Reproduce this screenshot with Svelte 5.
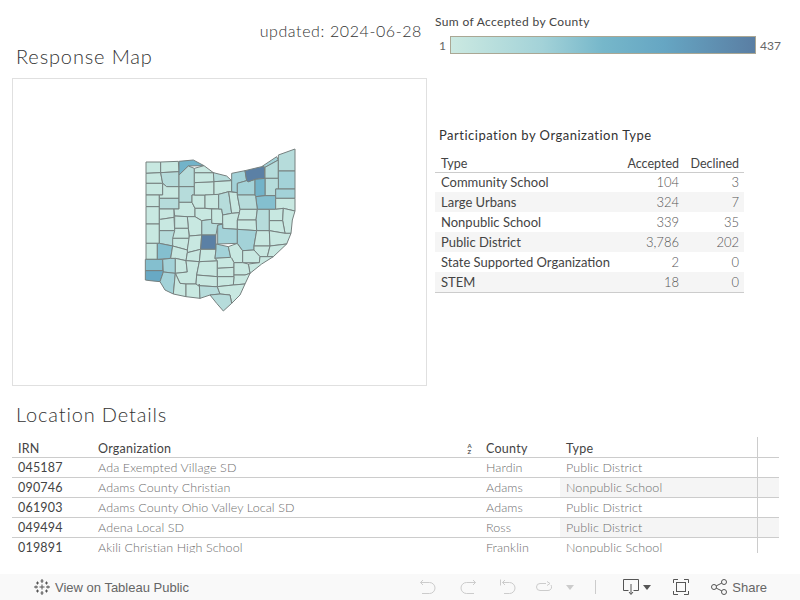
<script>
  const base = "#c8e8e1";
  const soft = "#b6dcdb";
  const mid = "#a3d2d8";
  const strong = "#84bfcf";
  const teal = "#72b3c9";
  const deep = "#5b80a5";

  // [points, fill], traced on a 540 x 540 box around the state
  const counties = [
    ["48,66 92,66 92,98 48,100", base],
    ["48,100 92,98 98,130 48,130", base],
    ["48,130 98,130 98,165 48,165", base],
    ["48,165 88,165 88,200 48,200", base],
    ["48,200 88,200 88,252 48,252", base],
    ["48,252 88,252 88,310 48,310", base],
    ["48,310 82,310 82,358 48,358", base],
    ["46,358 98,358 98,392 46,392", strong],
    ["46,392 100,392 100,396 90,425 60,422 46,420", "#68a9c4"],
    ["92,66 145,64 147,95 92,98", base],
    ["92,98 147,95 147,140 110,140 98,130", soft],
    ["98,130 110,140 147,140 147,175 88,175 88,165 98,165", base],
    ["88,175 147,175 147,207 88,207", soft],
    ["88,207 132,207 132,232 92,238 88,238", base],
    ["88,238 92,238 132,232 134,272 88,272", base],
    ["88,272 134,272 128,318 88,310", soft],
    ["82,310 88,310 128,318 122,355 82,358", strong],
    ["98,358 122,355 136,355 136,400 100,396", mid],
    ["100,396 136,400 130,462 105,450 90,425", mid],
    ["147,64 190,60 222,77 175,78 147,105", teal],
    ["147,105 175,78 193,85 193,140 147,140", soft],
    ["147,140 193,140 193,165 186,165 186,187 147,187", soft],
    ["147,187 186,187 195,205 195,230 172,230 134,228 132,207 147,207", base],
    ["186,165 225,165 225,205 195,205 186,187", base],
    ["193,128 252,125 252,165 193,165", base],
    ["193,98 252,98 252,125 193,128", base],
    ["193,85 222,77 250,98 193,98", base],
    ["250,98 290,108 305,122 252,125", soft],
    ["252,125 305,122 305,155 296,155 266,163 252,165", base],
    ["225,165 266,163 266,207 225,205", base],
    ["195,205 225,205 245,207 245,238 215,242 195,230", base],
    ["245,207 275,207 278,225 278,252 245,250", base],
    ["266,163 296,155 305,220 278,225 275,207 266,207", soft],
    ["296,155 322,158 322,165 330,208 328,218 305,220", base],
    ["305,100 345,92 350,122 322,130 322,158 305,155", mid],
    ["322,130 350,122 355,125 375,118 375,165 322,165", mid],
    ["345,92 395,80 403,80 405,115 375,118 355,125 350,122", deep],
    ["395,80 440,50 445,60 405,82 403,80", mid],
    ["405,82 445,60 445,115 405,115", soft],
    ["445,45 495,27 495,93 445,93", soft],
    ["445,93 495,93 495,147 437,147 445,147", mid],
    ["405,115 445,115 445,147 437,147 437,167 405,167", soft],
    ["375,118 405,115 405,167 377,170 375,165", teal],
    ["377,170 405,167 437,167 437,208 382,208", strong],
    ["437,147 495,147 495,175 437,175", mid],
    ["437,175 495,175 495,213 460,205 437,208", base],
    ["322,165 375,165 377,170 382,208 330,208", soft],
    ["330,208 382,208 378,240 322,240 328,218", base],
    ["382,208 418,208 418,272 380,272 378,240", soft],
    ["418,208 437,208 460,205 458,242 418,242", base],
    ["460,205 495,213 487,240 483,280 465,280 458,242", base],
    ["418,242 458,242 465,280 418,272", base],
    ["278,225 305,220 328,218 322,240 322,268 278,265 278,252", base],
    ["322,240 378,240 380,272 322,268", base],
    ["263,255 278,252 278,265 322,268 322,310 263,312", mid],
    ["215,242 245,238 245,250 278,252 263,255 258,285 215,285", soft],
    ["172,230 195,230 215,242 215,285 178,288 175,265", base],
    ["134,228 172,230 175,265 134,265", base],
    ["134,265 175,265 178,295 128,295 134,272", base],
    ["128,295 178,295 172,330 128,318", base],
    ["178,288 215,285 212,328 172,338 172,330", base],
    ["215,285 258,285 258,328 212,328", deep],
    ["128,318 172,330 172,338 168,362 136,355 122,355", base],
    ["136,355 168,362 172,396 136,400", base],
    ["172,338 212,328 208,365 168,362", base],
    ["136,400 172,396 168,362 208,365 200,405 198,432 168,432 150,430", base],
    ["136,400 150,430 168,432 168,470 130,462", base],
    ["168,432 208,432 210,475 168,470", base],
    ["208,365 262,362 262,410 200,405", base],
    ["212,328 258,328 255,355 262,362 208,365", base],
    ["258,312 295,320 302,352 255,355 258,328", mid],
    ["295,320 322,310 338,332 338,368 312,368 305,355 302,352", base],
    ["262,362 255,355 302,352 305,355 312,368 312,382 262,385", base],
    ["262,385 312,382 312,410 262,410", base],
    ["322,268 380,272 372,318 372,330 338,332 322,310", mid],
    ["380,272 418,272 420,318 372,318", base],
    ["418,272 465,280 483,280 470,312 420,318", base],
    ["372,318 420,318 412,350 390,350 372,330", base],
    ["420,318 470,312 430,350 412,350", base],
    ["338,332 372,330 390,350 388,368 338,368", base],
    ["390,350 430,350 395,372 360,400 355,372 388,368", base],
    ["312,368 338,368 355,372 360,400 345,405 312,405 312,382", base],
    ["312,405 345,405 360,400 345,432 310,435", base],
    ["262,410 312,410 310,435 262,440", base],
    ["200,405 262,410 262,440 255,440 205,437 198,432", base],
    ["205,437 255,440 262,440 270,462 240,465 210,475 208,432", soft],
    ["262,440 310,435 345,432 330,465 305,490 300,465 270,462", base],
    ["240,465 270,462 300,465 305,490 280,513 260,490", soft]
  ];

  const orgTypes = [
    ["Community School", "104", "3"],
    ["Large Urbans", "324", "7"],
    ["Nonpublic School", "339", "35"],
    ["Public District", "3,786", "202"],
    ["State Supported Organization", "2", "0"],
    ["STEM", "18", "0"]
  ];

  const locations = [
    ["045187", "Ada Exempted Village SD", "Hardin", "Public District"],
    ["090746", "Adams County Christian", "Adams", "Nonpublic School"],
    ["061903", "Adams County Ohio Valley Local SD", "Adams", "Public District"],
    ["049494", "Adena Local SD", "Ross", "Public District"],
    ["019891", "Akili Christian High School", "Franklin", "Nonpublic School"]
  ];
</script>

<div class="page">
  <div class="top">
    <section class="left">
      <div class="updated">updated: 2024-06-28</div>
      <h1>Response Map</h1>
      <div class="map">
        <svg width="180" height="180" viewBox="0 0 540 540" aria-label="Map of Ohio counties">
          {#each counties as [points, fill]}
            <polygon {points} {fill} stroke="#76807f" stroke-width="3" stroke-linejoin="round" />
          {/each}
        </svg>
      </div>
    </section>

    <section class="right">
      <div class="legend">
        <div class="legend-title">Sum of Accepted by County</div>
        <div class="legend-row">
          <span class="legend-min">1</span>
          <span class="legend-bar"></span>
          <span class="legend-max">437</span>
        </div>
      </div>
      <h2>Participation by Organization Type</h2>
      <div class="types">
        <div class="type-row type-head">
          <span>Type</span><span class="num">Accepted</span><span class="num">Declined</span>
        </div>
        {#each orgTypes as [name, accepted, declined]}
          <div class="type-row">
            <span class="type-name">{name}</span><span class="num val">{accepted}</span><span class="num val">{declined}</span>
          </div>
        {/each}
      </div>
    </section>
  </div>

  <section class="details">
    <h1>Location Details</h1>
    <div class="loc-table">
      <div class="loc-row loc-head">
        <span class="irn">IRN</span>
        <span class="org-head">Organization<span class="sort">A<br />Z</span></span>
        <span>County</span>
        <span>Type</span>
      </div>
      {#each locations as [irn, org, county, type]}
        <div class="loc-row">
          <span class="irn">{irn}</span>
          <span>{org}</span>
          <span>{county}</span>
          <span class="loc-type">{type}</span>
        </div>
      {/each}
      <div class="vline"></div>
    </div>
  </section>

  <footer class="toolbar">
    <div class="view">
      <svg width="18" height="18" viewBox="0 0 18 18" stroke="#555" stroke-width="1" fill="none">
        <path d="M9 1v4M7.500 3h3M9 13v4M7.500 15h3M1 9h4M3 7.500v3M13 9h4M15 7.500v3M4.500 3.500v3M3 5h3M13.500 3.500v3M12 5h3M4.500 11.500v3M3 13h3M13.500 11.500v3M12 13h3M9 6.500v5M6.500 9h5" />
      </svg>
      <span>View on Tableau Public</span>
    </div>
    <div class="actions">
      <svg class="ic" width="16" height="16" viewBox="0 0 16 16" fill="none" stroke="#ccc" stroke-width="1">
        <path d="M0.500 3.500h9a5.500 5.500 0 0 1 0 11H2M3 1 .5 3.500 3 6" />
      </svg>
      <svg class="ic gap-24" width="16" height="16" viewBox="0 0 16 16" fill="none" stroke="#ccc" stroke-width="1">
        <path d="M15.500 3.500h-9a5.500 5.500 0 0 0 0 11H14M13 1l2.500 2.500L13 6" />
      </svg>
      <svg class="ic gap-24" width="16" height="16" viewBox="0 0 16 16" fill="none" stroke="#ccc" stroke-width="1">
        <path d="M.5 .5v6M2.500 3.500h7a5.500 5.500 0 0 1 0 11H4M5 1 2.500 3.500 5 6" />
      </svg>
      <svg class="ic gap-20" width="16" height="16" viewBox="0 0 16 16" fill="none" stroke="#ccc" stroke-width="1">
        <path d="M10 4.500H4a3.500 3.500 0 0 0 0 7h8a3.500 3.500 0 0 0 3-5.500M11 2.500l3 2-3 2" />
      </svg>
      <span class="caret light"></span>
      <span class="divider"></span>
      <svg class="ic" width="16" height="16" viewBox="0 0 16 16" fill="none" stroke="#555" stroke-width="1">
        <path d="M5.500 11.500h-5V.5h15v11h-5M8 5v10M6 13l2 2.500 2-2.500" />
      </svg>
      <span class="caret"></span>
      <svg class="ic gap-22" width="16" height="16" viewBox="0 0 16 16" fill="none" stroke="#555" stroke-width="1">
        <path d="M.5 4V.5H5M11 .5h4.500V4M15.500 12v3.500H11M5 15.500H.5V12" />
        <rect x="3.500" y="3.500" width="9" height="9" />
      </svg>
      <svg class="ic gap-22" width="16" height="16" viewBox="0 0 16 16" fill="none" stroke="#555" stroke-width="1">
        <circle cx="3" cy="8" r="2.500" />
        <circle cx="13" cy="3" r="2.500" />
        <circle cx="13" cy="13" r="2.500" />
        <path d="M5.200 6.900 10.800 4.100M5.200 9.100l5.600 2.800" />
      </svg>
      <span class="share">Share</span>
    </div>
  </footer>
</div>

<style>
  :global(body) {
    background: #fff;
  }

  .page {
    width: 800px;
    height: 600px;
    overflow: hidden;
    display: flex;
    flex-direction: column;
    font-family: Lato, "Open Sans", sans-serif;
    color: #555;
  }

  h1 {
    margin: 0;
    font-size: 20px;
    line-height: 26px;
    font-weight: 300;
    color: #333;
    letter-spacing: 0.85px;
  }

  .top {
    display: flex;
    height: 399px;
    flex: none;
  }

  .left {
    width: 415px;
    flex: none;
    margin-left: 12px;
  }

  .updated {
    margin-top: 21px;
    padding-right: 5px;
    height: 20px;
    text-align: right;
    font-size: 16px;
    line-height: 20px;
    font-weight: 300;
    color: #333;
    letter-spacing: 0.6px;
  }

  .left h1 {
    margin: 2px 0 9px 4px;
  }

  .map {
    height: 306px;
    border: 1px solid #e0e0e0;
    display: flex;
    align-items: center;
    justify-content: center;
  }

  .map svg {
    display: block;
    margin: 0 0 4px 0;
  }

  .right {
    margin-left: 8px;
    width: 365px;
  }

  .legend {
    margin-top: 14px;
    font-size: 12px;
  }

  .legend-title {
    line-height: 15px;
    color: #444;
    letter-spacing: 0.35px;
  }

  .legend-row {
    display: flex;
    align-items: center;
    margin-top: 7px;
    height: 18px;
    color: #666;
  }

  .legend-min {
    width: 11px;
    text-align: right;
  }

  .legend-bar {
    width: 304px;
    height: 16px;
    margin: 0 4px;
    border: 1px solid #aaa794;
    background: linear-gradient(to right, #cbe9e1 0%, #a3d2d8 30%, #76b7ca 50%, #66a6c3 70%, #5a7ea3 100%);
  }

  h2 {
    margin: 72px 0 0 4px;
    font-size: 13px;
    line-height: 18px;
    font-weight: 400;
    color: #333;
    letter-spacing: 0.5px;
  }

  .types {
    margin-top: 9px;
    width: 309px;
    border-bottom: 1px solid #ccc;
    font-size: 12.5px;
    color: #777;
  }

  .type-row {
    display: grid;
    grid-template-columns: 178px 60px 60px;
    height: 20px;
    line-height: 21px;
    padding-left: 6px;
    box-sizing: border-box;
  }

  .type-row:nth-child(2) {
    height: 19px;
    line-height: 19px;
  }

  .type-row:nth-child(odd) {
    background: #f5f5f5;
  }

  .type-row.type-head {
    background: none;
    border-bottom: 1px solid #ccc;
    color: #444;
  }

  .type-name {
    color: #444;
    white-space: nowrap;
    font-size: 13px;
  }

  .val {
    font-weight: 300;
    color: #555;
    font-size: 13px;
  }

  .num {
    text-align: right;
  }

  .details {
    flex: none;
    height: 175px;
    padding-left: 12px;
    box-sizing: border-box;
  }

  .details h1 {
    margin: 2px 0 0 4px;
  }

  .loc-table {
    position: relative;
    width: 767px;
    height: 116px;
    margin-top: 10px;
    padding-top: 1px;
    box-sizing: border-box;
    overflow: hidden;
    font-size: 12.5px;
    font-weight: 300;
    color: #6f6f6f;
    letter-spacing: 0.1px;
  }

  .loc-row {
    display: grid;
    grid-template-columns: 86px 388px 80px 1fr;
    height: 20px;
    line-height: 19px;
    border-bottom: 1px solid #ccc;
    box-sizing: border-box;
  }

  .loc-row > span {
    white-space: nowrap;
  }

  .loc-row .irn {
    padding-left: 6px;
    color: #444;
    font-weight: 400;
    letter-spacing: 0.2px;
  }

  .loc-head {
    color: #444;
    font-weight: 400;
    letter-spacing: 0.25px;
  }

  .loc-row.loc-head > span {
    line-height: 21px;
    color: #444;
  }

  .org-head {
    position: relative;
  }

  .loc-row .sort {
    position: absolute;
    right: 14px;
    top: 5px;
    font-size: 6px;
    line-height: 6px;
    font-weight: 700;
    color: #555;
  }

  .loc-row .loc-type {
    margin-left: -6px;
    padding-left: 6px;
  }

  .loc-row:nth-child(3) .loc-type,
  .loc-row:nth-child(5) .loc-type {
    background: #f5f5f5;
  }

  .vline {
    position: absolute;
    left: 745px;
    top: 0;
    bottom: 0;
    width: 1px;
    background: #ccc;
  }

  .toolbar {
    flex: none;
    height: 26px;
    background: #f9f9f9;
    display: flex;
    justify-content: space-between;
    align-items: center;
    font-family: "Liberation Sans", Arial, sans-serif;
    font-size: 13px;
    color: #666;
  }

  .view {
    display: flex;
    align-items: center;
    gap: 4px;
    margin-left: 33px;
  }

  .view svg,
  .ic {
    display: block;
    flex: none;
  }

  .actions {
    display: flex;
    align-items: center;
    margin-right: 33px;
  }

  .gap-24 {
    margin-left: 24px;
  }

  .gap-20 {
    margin-left: 20px;
  }

  .gap-22 {
    margin-left: 22px;
  }

  .caret {
    width: 0;
    height: 0;
    margin-left: 4px;
    border-left: 4px solid transparent;
    border-right: 4px solid transparent;
    border-top: 5px solid #555;
  }

  .caret.light {
    border-top-color: #ccc;
    margin-left: 14px;
  }

  .divider {
    width: 1px;
    height: 14px;
    background: #ccc;
    margin: 0 27px 0 21px;
  }

  .share {
    margin-left: 5px;
  }
</style>
